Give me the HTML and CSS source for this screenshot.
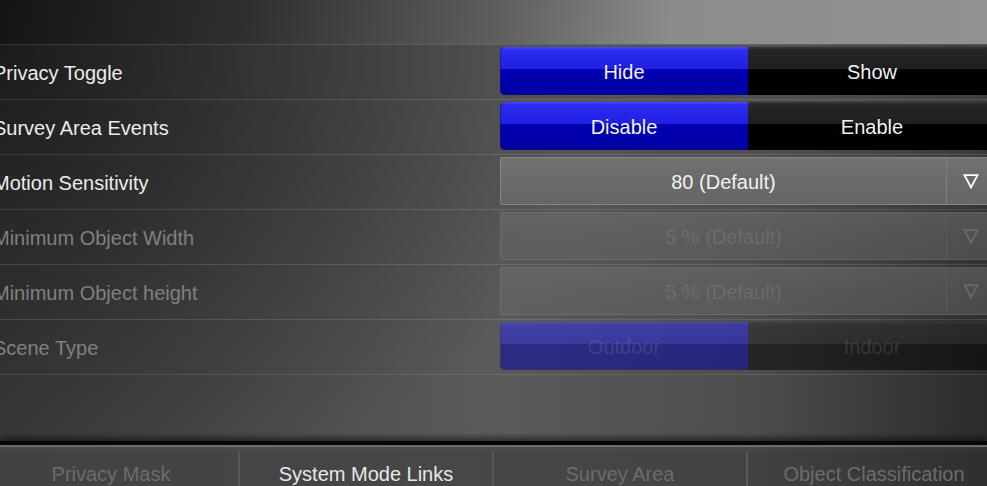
FILE: index.html
```html
<!DOCTYPE html>
<html>
<head>
<meta charset="utf-8">
<link rel="stylesheet" href="styles.css">
</head>
<body>
<div class="app">
  <div class="header"></div>
  <div class="main">
    <div class="rows">
      <div class="row">
        <div class="label">Privacy Toggle</div>
        <div class="control seg">
          <div class="seg-btn on">Hide</div>
          <div class="seg-btn">Show</div>
        </div>
      </div>
      <div class="row">
        <div class="label">Survey Area Events</div>
        <div class="control seg">
          <div class="seg-btn on">Disable</div>
          <div class="seg-btn">Enable</div>
        </div>
      </div>
      <div class="row">
        <div class="label">Motion Sensitivity</div>
        <div class="control select">
          <div class="value">80 (Default)</div>
          <div class="arrow"><svg width="16" height="15" viewBox="0 0 16 15"><polygon points="1.5,1.2 14.5,1.2 8,13.5" fill="none" stroke="currentColor" stroke-width="1.8" stroke-linejoin="miter"/></svg></div>
        </div>
      </div>
      <div class="row disabled">
        <div class="label">Minimum Object Width</div>
        <div class="control select">
          <div class="value">5 % (Default)</div>
          <div class="arrow"><svg width="16" height="15" viewBox="0 0 16 15"><polygon points="1.5,1.2 14.5,1.2 8,13.5" fill="none" stroke="currentColor" stroke-width="1.8" stroke-linejoin="miter"/></svg></div>
        </div>
      </div>
      <div class="row disabled">
        <div class="label">Minimum Object height</div>
        <div class="control select">
          <div class="value">5 % (Default)</div>
          <div class="arrow"><svg width="16" height="15" viewBox="0 0 16 15"><polygon points="1.5,1.2 14.5,1.2 8,13.5" fill="none" stroke="currentColor" stroke-width="1.8" stroke-linejoin="miter"/></svg></div>
        </div>
      </div>
      <div class="row disabled">
        <div class="label">Scene Type</div>
        <div class="control seg">
          <div class="seg-btn on">Outdoor</div>
          <div class="seg-btn">Indoor</div>
        </div>
      </div>
    </div>
  </div>
  <div class="tabbar">
    <div class="tabs">
      <div class="tab">Privacy Mask</div>
      <div class="tab active">System Mode Links</div>
      <div class="tab">Survey Area</div>
      <div class="tab">Object Classification</div>
    </div>
  </div>
</div>
</body>
</html>
```
FILE: styles.css
```css
html, body {
  margin: 0;
  padding: 0;
  height: 100%;
  overflow: hidden;
}

body {
  background: #2a2a2a;
  font-family: "Liberation Sans", Arial, sans-serif;
  font-size: 20px;
}

.app {
  width: 987px;
  height: 486px;
  overflow: hidden;
  display: flex;
  flex-direction: column;
}

.header {
  flex: none;
  height: 44px;
  background: linear-gradient(100deg, #141414 0%, #2f2f2f 25%, #5d5d5d 50%, #8c8c8c 68%, #919191 100%);
}

.main {
  flex: none;
  height: 397px;
  background:
    radial-gradient(ellipse 620px 480px at 0 0, rgba(0,0,0,0.55), rgba(0,0,0,0) 100%),
    radial-gradient(ellipse 320px 320px at 100% 0, rgba(255,255,255,0.1), rgba(255,255,255,0) 100%),
    linear-gradient(to right, #3d3d3d 0%, #4c4c4c 25%, #5a5a5a 50%, #4d4d4d 76%, #2b2b2b 100%);
}

.rows {
  border-bottom: 1px solid rgba(255,255,255,0.1);
}

.row {
  display: grid;
  grid-template-columns: 500px 496px;
  height: 54px;
  border-top: 1px solid rgba(255,255,255,0.12);
}

.label {
  margin-left: -7px;
  padding-top: 1px;
  line-height: 54px;
  color: #ececec;
  white-space: nowrap;
}

.row.disabled .label {
  color: #808080;
}

.control {
  margin-top: 2px;
  height: 48px;
}

.row.disabled .control {
  opacity: 0.5;
}

/* segmented buttons */
.seg {
  display: grid;
  grid-template-columns: 248px 248px;
}

.seg-btn {
  box-sizing: border-box;
  padding-top: 2px;
  line-height: 46px;
  text-align: center;
  color: #f2f2f2;
  background: linear-gradient(to bottom, #363636 0, #262626 6%, #1f1f1f 45%, #000 46%, #000 100%);
  border-radius: 0 5px 5px 0;
}

.seg-btn.on {
  background: linear-gradient(to bottom, #4a4aff 0, #2c2cf2 6%, #2020e2 45%, #0000b2 46%, #0000a4 100%);
  border-radius: 5px 0 0 5px;
  box-shadow: inset 1px 0 0 rgba(20,20,90,0.6), inset 0 -1px 0 rgba(20,20,90,0.6);
}

.row.disabled .seg-btn {
  color: rgba(255,255,255,0.2);
}

/* select */
.select {
  display: flex;
  box-sizing: border-box;
  border: 1px solid #858585;
  border-radius: 2px;
  background: linear-gradient(to bottom, #727272 0, #6a6a6a 50%, #666 100%);
  color: #f2f2f2;
}

.select .value {
  flex: 1;
  text-align: center;
  padding-top: 1px;
  line-height: 46px;
}

.select .arrow {
  width: 48px;
  border-left: 1px solid #7e7e7e;
  display: flex;
  align-items: center;
  justify-content: center;
  color: #fff;
}

.select .arrow svg {
  display: block;
  margin-top: 1px;
}

.row.disabled .select {
  color: rgba(255,255,255,0.22);
}

.row.disabled .select .arrow {
  color: rgba(255,255,255,0.35);
}

/* tab bar */
.tabbar {
  flex: none;
  border-top: 4px solid #060606;
  box-shadow: 0 -4px 5px rgba(0,0,0,0.45);
  background: linear-gradient(to right, #424242 0%, #474747 45%, #434343 75%, #2f2f2f 100%);
}

.tabs {
  border-top: 2px solid #6b6b6b;
  display: grid;
  grid-template-columns: repeat(4, 254px);
  margin-left: -16px;
  height: 60px;
  background: linear-gradient(to bottom, rgba(255,255,255,0.04) 0, rgba(255,255,255,0) 6px);
}

.tab {
  margin-top: 4px;
  padding-top: 1px;
  line-height: 44px;
  text-align: center;
  color: #6c6c6c;
  white-space: nowrap;
}

.tab + .tab {
  border-left: 2px solid #575757;
}

.tab.active {
  color: #e8e8e8;
}
```
